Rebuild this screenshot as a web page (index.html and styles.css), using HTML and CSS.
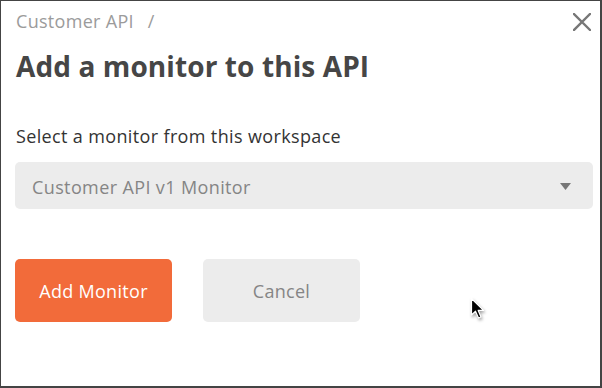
FILE: index.html
```html
<!DOCTYPE html>
<html>
<head>
<meta charset="utf-8">
<link rel="stylesheet" href="styles.css">
</head>
<body>
<div class="dialog">
  <div class="header">
    <div class="crumb">Customer API<span class="sep">/</span></div>
    <svg class="close" width="18" height="18" viewBox="0 0 18 18"><path d="M1 1 L17 17 M17 1 L1 17" stroke="#777" stroke-width="2.4" stroke-linecap="square" fill="none"/></svg>
  </div>
  <h1 class="title">Add a monitor to this API</h1>
  <div class="label">Select a monitor from this workspace</div>
  <div class="select">
    <span class="select-text">Customer API v1 Monitor</span>
    <svg class="caret" width="11" height="7" viewBox="0 0 11 7"><path d="M0 0 H11 L5.5 7 Z" fill="#777"/></svg>
  </div>
  <div class="actions">
    <button class="btn primary">Add Monitor</button>
    <button class="btn secondary">Cancel</button>
  </div>
  <svg class="cursor" width="16" height="24" viewBox="0 0 16 24"><path d="M1.5 1.5 V18 L5.5 14.2 L8.5 21 L11 20 L8.2 13.4 L13.5 13.4 Z" fill="#000" stroke="#fff" stroke-width="1.2" stroke-linejoin="round"/></svg>
</div>
</body>
</html>
```

FILE: styles.css
```css
html, body {
  margin: 0;
  padding: 0;
  background: #fff;
}
.dialog {
  position: relative;
  box-sizing: border-box;
  width: 602px;
  height: 388px;
  border-style: solid;
  border-color: #444;
  border-width: 1px 2px 2px 1px;
  padding: 0 7px 0 14px;
  font-family: "Open Sans", "Noto Sans", sans-serif;
  overflow: hidden;
}
.header {
  display: flex;
  justify-content: space-between;
  align-items: flex-start;
  padding-top: 8px;
}
.crumb {
  font-size: 18px;
  line-height: 24px;
  color: #9b9b9b;
  padding-left: 1px;
  letter-spacing: 0.3px;
}
.sep {
  margin-left: 14px;
}
.close {
  margin-top: 4px;
  margin-right: 2px;
}
.title {
  margin: 15px 0 0 0;
  font-size: 28px;
  line-height: 36px;
  font-weight: 700;
  color: #464646;
  padding-left: 1px;
  letter-spacing: 0.1px;
}
.label {
  margin-top: 40px;
  font-size: 18px;
  line-height: 24px;
  color: #333;
  padding-left: 1px;
  letter-spacing: 0.36px;
}
.select {
  margin-top: 14px;
  height: 47px;
  box-sizing: border-box;
  padding: 13px 22px 10px 17px;
  background: #ececec;
  border-radius: 5px;
  display: flex;
  justify-content: space-between;
  align-items: flex-start;
}
.select-text {
  font-size: 18px;
  line-height: 24px;
  color: #858585;
  letter-spacing: 0.38px;
}
.caret {
  margin-top: 8px;
}
.actions {
  display: flex;
  gap: 31px;
  margin-top: 50px;
}
.btn {
  width: 157px;
  height: 63px;
  border: none;
  border-radius: 5px;
  font-family: "Open Sans", "Noto Sans", sans-serif;
  font-size: 18px;
  line-height: 24px;
  padding: 0;
  letter-spacing: 0.3px;
}
.primary {
  background: #f26b3a;
  color: #fff;
}
.secondary {
  background: #ececec;
  color: #858585;
}
.cursor {
  position: absolute;
  left: 469px;
  top: 296px;
  filter: drop-shadow(1px 2px 1.5px rgba(0,0,0,0.35));
}
```
